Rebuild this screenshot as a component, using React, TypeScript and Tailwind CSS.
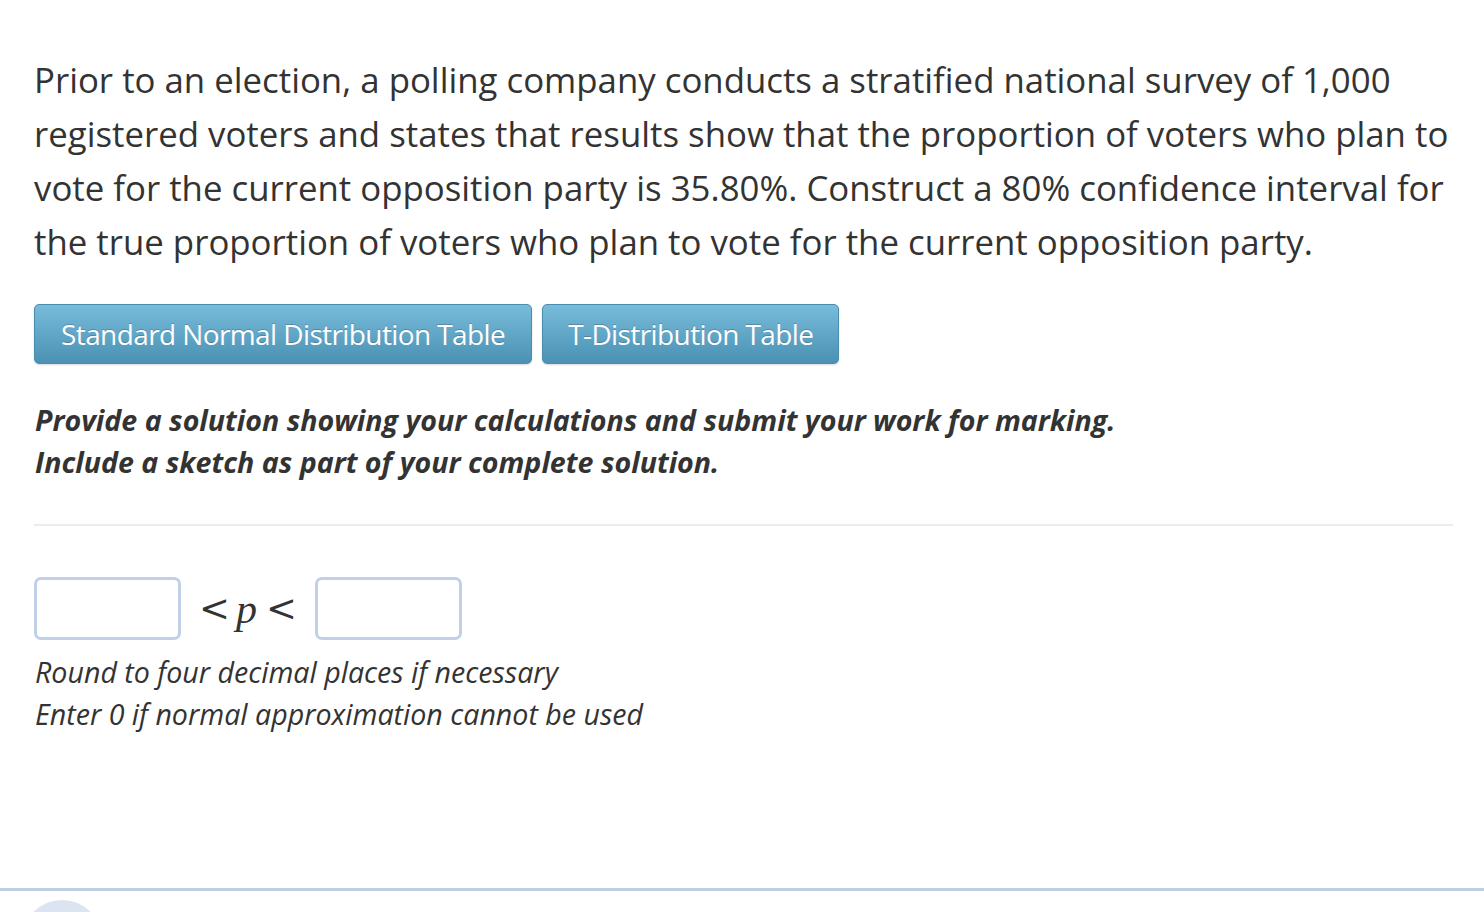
export default function App() {
  return (
    <div className="w-[1484px] h-[912px] bg-white overflow-hidden relative" style={{ fontFamily: '"Open Sans", "Noto Sans", sans-serif' }}>
      <div className="pl-[34px] pr-[31px] pt-[53px]">
        {/* Question */}
        <p className="text-[34.8px] leading-[54px] text-[#333333]">
          Prior to an election, a polling company conducts a stratified national survey of 1,000 registered voters and states that results show that the proportion of voters who plan to vote for the current opposition party is 35.80%. Construct a 80% confidence interval for the true proportion of voters who plan to vote for the current opposition party.
        </p>

        {/* Table buttons */}
        <div className="flex gap-[10px] mt-[35px]">
          <button className="h-[60px] px-[26px] rounded-[5px] border border-[#4a8db0] bg-gradient-to-b from-[#78bcdb] to-[#4a91b3] text-white text-[28px] tracking-[-0.6px] shadow-[0_1px_2px_rgba(0,0,0,0.15)] [text-shadow:0_-1px_0_rgba(0,0,0,0.2)]">
            Standard Normal Distribution Table
          </button>
          <button className="h-[60px] px-[25px] rounded-[5px] border border-[#4a8db0] bg-gradient-to-b from-[#78bcdb] to-[#4a91b3] text-white text-[28px] tracking-[-0.6px] shadow-[0_1px_2px_rgba(0,0,0,0.15)] [text-shadow:0_-1px_0_rgba(0,0,0,0.2)]">
            T-Distribution Table
          </button>
        </div>

        {/* Instructions */}
        <div className="mt-[35px] text-[28.6px] leading-[42px] font-bold italic text-[#333333] pl-[1px]">
          <p>Provide a solution showing your calculations and submit your work for marking.</p>
          <p>Include a sketch as part of your complete solution.</p>
        </div>

        <div className="mt-[41px] h-[2px] bg-[#ececec]" />

        {/* Answer */}
        <div className="mt-[51px] flex items-center">
          <div className="w-[147px] h-[63px] rounded-[7px] border-[3px] border-[#bfd0e8] bg-white" />
          <span className="ml-[18px] text-[37px] text-[#333333] leading-none" style={{ fontFamily: '"DejaVu Serif", serif' }}>&lt;</span>
          <span className="ml-[6px] text-[42px] italic text-[#333333] leading-none" style={{ fontFamily: '"Liberation Serif", serif' }}>p</span>
          <span className="ml-[9px] text-[37px] text-[#333333] leading-none" style={{ fontFamily: '"DejaVu Serif", serif' }}>&lt;</span>
          <div className="ml-[18px] w-[147px] h-[63px] rounded-[7px] border-[3px] border-[#bfd0e8] bg-white" />
        </div>

        <div className="mt-[11px] text-[28.6px] leading-[42px] italic text-[#333333] pl-[1px]">
          <p>Round to four decimal places if necessary</p>
          <p>Enter 0 if normal approximation cannot be used</p>
        </div>
      </div>

      {/* Bottom rule */}
      <div className="absolute left-0 right-0 top-[888px] h-[3px] bg-[#bccde4]" />
      <div className="absolute left-[22px] top-[900px] w-[80px] h-[80px] rounded-full bg-[#dce4f1]" />
    </div>
  );
}
